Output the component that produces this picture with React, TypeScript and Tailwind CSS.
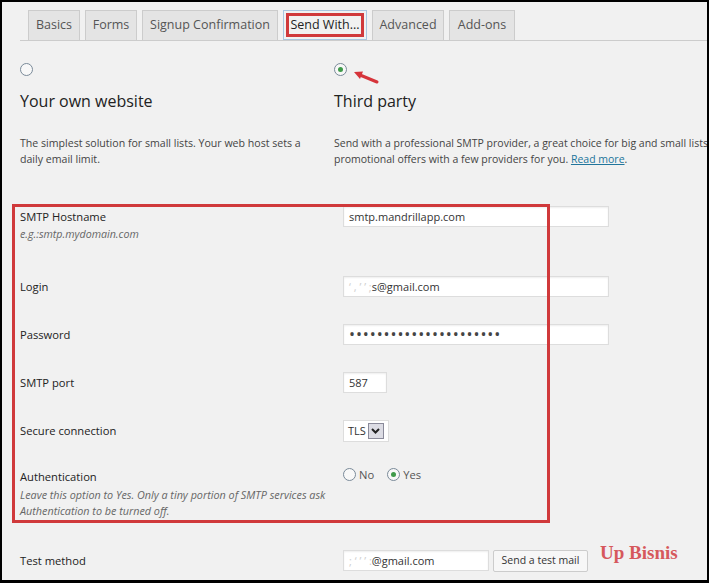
import React from "react";

const tabs = [
  { label: "Basics", w: "w-[52px]" },
  { label: "Forms", w: "w-[52px]" },
  { label: "Signup Confirmation", w: "w-[136px]" },
  { label: "Send With...", w: "w-[84px]", active: true },
  { label: "Advanced", w: "w-[72px]" },
  { label: "Add-ons", w: "w-[66px]" },
];

function Radio({ checked }: { checked?: boolean }) {
  return (
    <span className="flex w-[13px] h-[13px] shrink-0 items-center justify-center rounded-full border border-[#7a8a99] bg-[#f8f8f8]">
      {checked && <span className="w-[5px] h-[5px] rounded-full bg-[#3f9a4a]" />}
    </span>
  );
}

function TextInput({ w, children }: { w: string; children?: React.ReactNode }) {
  return (
    <div
      className={`${w} h-[21px] bg-white border border-[#dddddd] shadow-[inset_0_1px_2px_rgba(0,0,0,0.07)] px-[5px] text-[11px] leading-[19px] text-[#333] whitespace-nowrap overflow-hidden`}
    >
      {children}
    </div>
  );
}

export default function App() {
  return (
    <div
      className="relative w-[709px] h-[583px] overflow-hidden bg-[#f1f1f1] border-2 border-b-[3px] border-black text-[#444]"
      style={{ fontFamily: '"Open Sans", "Noto Sans", sans-serif' }}
    >
      {/* tabs */}
      <div className="mt-[8px] ml-[18px] flex gap-[5px] pl-[8px] border-b border-[#cccccc]">
        {tabs.map((t) =>
          t.active ? (
            <div
              key={t.label}
              className={`${t.w} h-[30px] -mb-px p-[2px] border border-[#a9c6e0] bg-[#f1f1f1]`}
            >
              <div className="h-full flex items-center justify-center border-[3px] border-[#d0393b] text-[12.5px] text-[#222]">
                {t.label}
              </div>
            </div>
          ) : (
            <div
              key={t.label}
              className={`${t.w} h-[30px] flex items-center justify-center border border-b-0 border-[#cccccc] bg-[#e4e4e4] text-[12.5px] text-[#555]`}
            >
              {t.label}
            </div>
          )
        )}
      </div>

      {/* sending method choice */}
      <div className="ml-[18px] mt-[22px] grid grid-cols-[314px_1fr]">
        <div>
          <Radio />
          <div className="mt-[13px] text-[16px] leading-[24px] text-[#222]">Your own website</div>
          <p className="mt-[22px] text-[10.6px] leading-[16px] text-[#444]">
            The simplest solution for small lists. Your web host sets a
            <br />
            daily email limit.
          </p>
        </div>
        <div>
          <Radio checked />
          <div className="mt-[13px] text-[16px] leading-[24px] text-[#222]">Third party</div>
          <p className="mt-[22px] text-[10.5px] leading-[16px] text-[#444] whitespace-nowrap">
            Send with a professional SMTP provider, a great choice for big and small lists. We've negotiated
            <br />
            promotional offers with a few providers for you.{" "}
            <span className="text-[#21759b] underline">Read more</span>.
          </p>
        </div>
      </div>

      {/* smtp settings */}
      <div className="ml-[18px] mt-[39px] text-[11.2px] text-[#222]">
        <div className="flex h-[70px]">
          <div className="w-[323px]">
            <div className="leading-[21px]">SMTP Hostname</div>
            <div className="text-[10.7px] italic leading-[14px] text-[#666]">e.g.:smtp.mydomain.com</div>
          </div>
          <TextInput w="w-[266px]">smtp.mandrillapp.com</TextInput>
        </div>
        <div className="flex h-[48px]">
          <div className="w-[323px] leading-[21px]">Login</div>
          <TextInput w="w-[266px]">
            <span className="text-[#cfcfcf]">‘ ,  ’ ’ ;</span>s@gmail.com
          </TextInput>
        </div>
        <div className="flex h-[48px]">
          <div className="w-[323px] leading-[21px]">Password</div>
          <TextInput w="w-[266px]">
            <span className="text-[16px] tracking-[0.9px] text-[#444]">••••••••••••••••••••••</span>
          </TextInput>
        </div>
        <div className="flex h-[48px]">
          <div className="w-[323px] leading-[21px]">SMTP port</div>
          <TextInput w="w-[44px]">587</TextInput>
        </div>
        <div className="flex h-[46px]">
          <div className="w-[323px] leading-[21px]">Secure connection</div>
          <div className="w-[46px] h-[22px] bg-white border border-[#dddddd] flex items-center pl-[4px] gap-[2px] text-[11px] text-[#333]">
            <span>TLS</span>
            <span className="w-[16px] h-[16px] flex items-center justify-center border border-[#8a8a9a] bg-[#dcdce4]">
              <svg width="9" height="6" viewBox="0 0 9 6">
                <path d="M1 1 L4.5 4.5 L8 1" stroke="#222" strokeWidth="2" fill="none" />
              </svg>
            </span>
          </div>
        </div>
        <div className="flex h-[84px]">
          <div className="w-[323px]">
            <div className="leading-[21px]">Authentication</div>
            <div className="text-[10.8px] italic leading-[16px] text-[#666]">
              Leave this option to Yes. Only a tiny portion of SMTP services ask
              <br />
              Authentication to be turned off.
            </div>
          </div>
          <div className="flex items-center h-[18px] gap-[13px] text-[11.2px] text-[#555]">
            <span className="flex items-center gap-[3px]">
              <Radio />
              No
            </span>
            <span className="flex items-center gap-[3px]">
              <Radio checked />
              Yes
            </span>
          </div>
        </div>
        <div className="flex">
          <div className="w-[323px] leading-[21px]">Test method</div>
          <TextInput w="w-[146px]">
            <span className="text-[#cfcfcf]">;  ‘  ’   ’ :</span>@gmail.com
          </TextInput>
          <button className="ml-[4px] w-[95px] h-[22px] bg-[#f7f7f7] border border-[#cccccc] rounded-[2px] text-[10.5px] text-[#333]">
            Send a test mail
          </button>
        </div>
      </div>

      {/* annotations */}
      <div className="pointer-events-none absolute left-[10px] top-[202px] w-[538px] h-[319px] border-[3px] border-[#d0393b]" />
      <svg className="pointer-events-none absolute left-[348px] top-[64px]" width="32" height="20" viewBox="0 0 32 20">
        <path d="M27 16 L10 9" stroke="#d6343a" strokeWidth="3" strokeLinecap="round" />
        <path d="M4 6 L13 5.5 L10 13 Z" fill="#d6343a" />
      </svg>
      <div
        className="pointer-events-none absolute left-[598px] top-[537px] text-[19px] font-bold text-[#d6585c]"
        style={{ fontFamily: '"Liberation Serif", serif' }}
      >
        Up Bisnis
      </div>
    </div>
  );
}
